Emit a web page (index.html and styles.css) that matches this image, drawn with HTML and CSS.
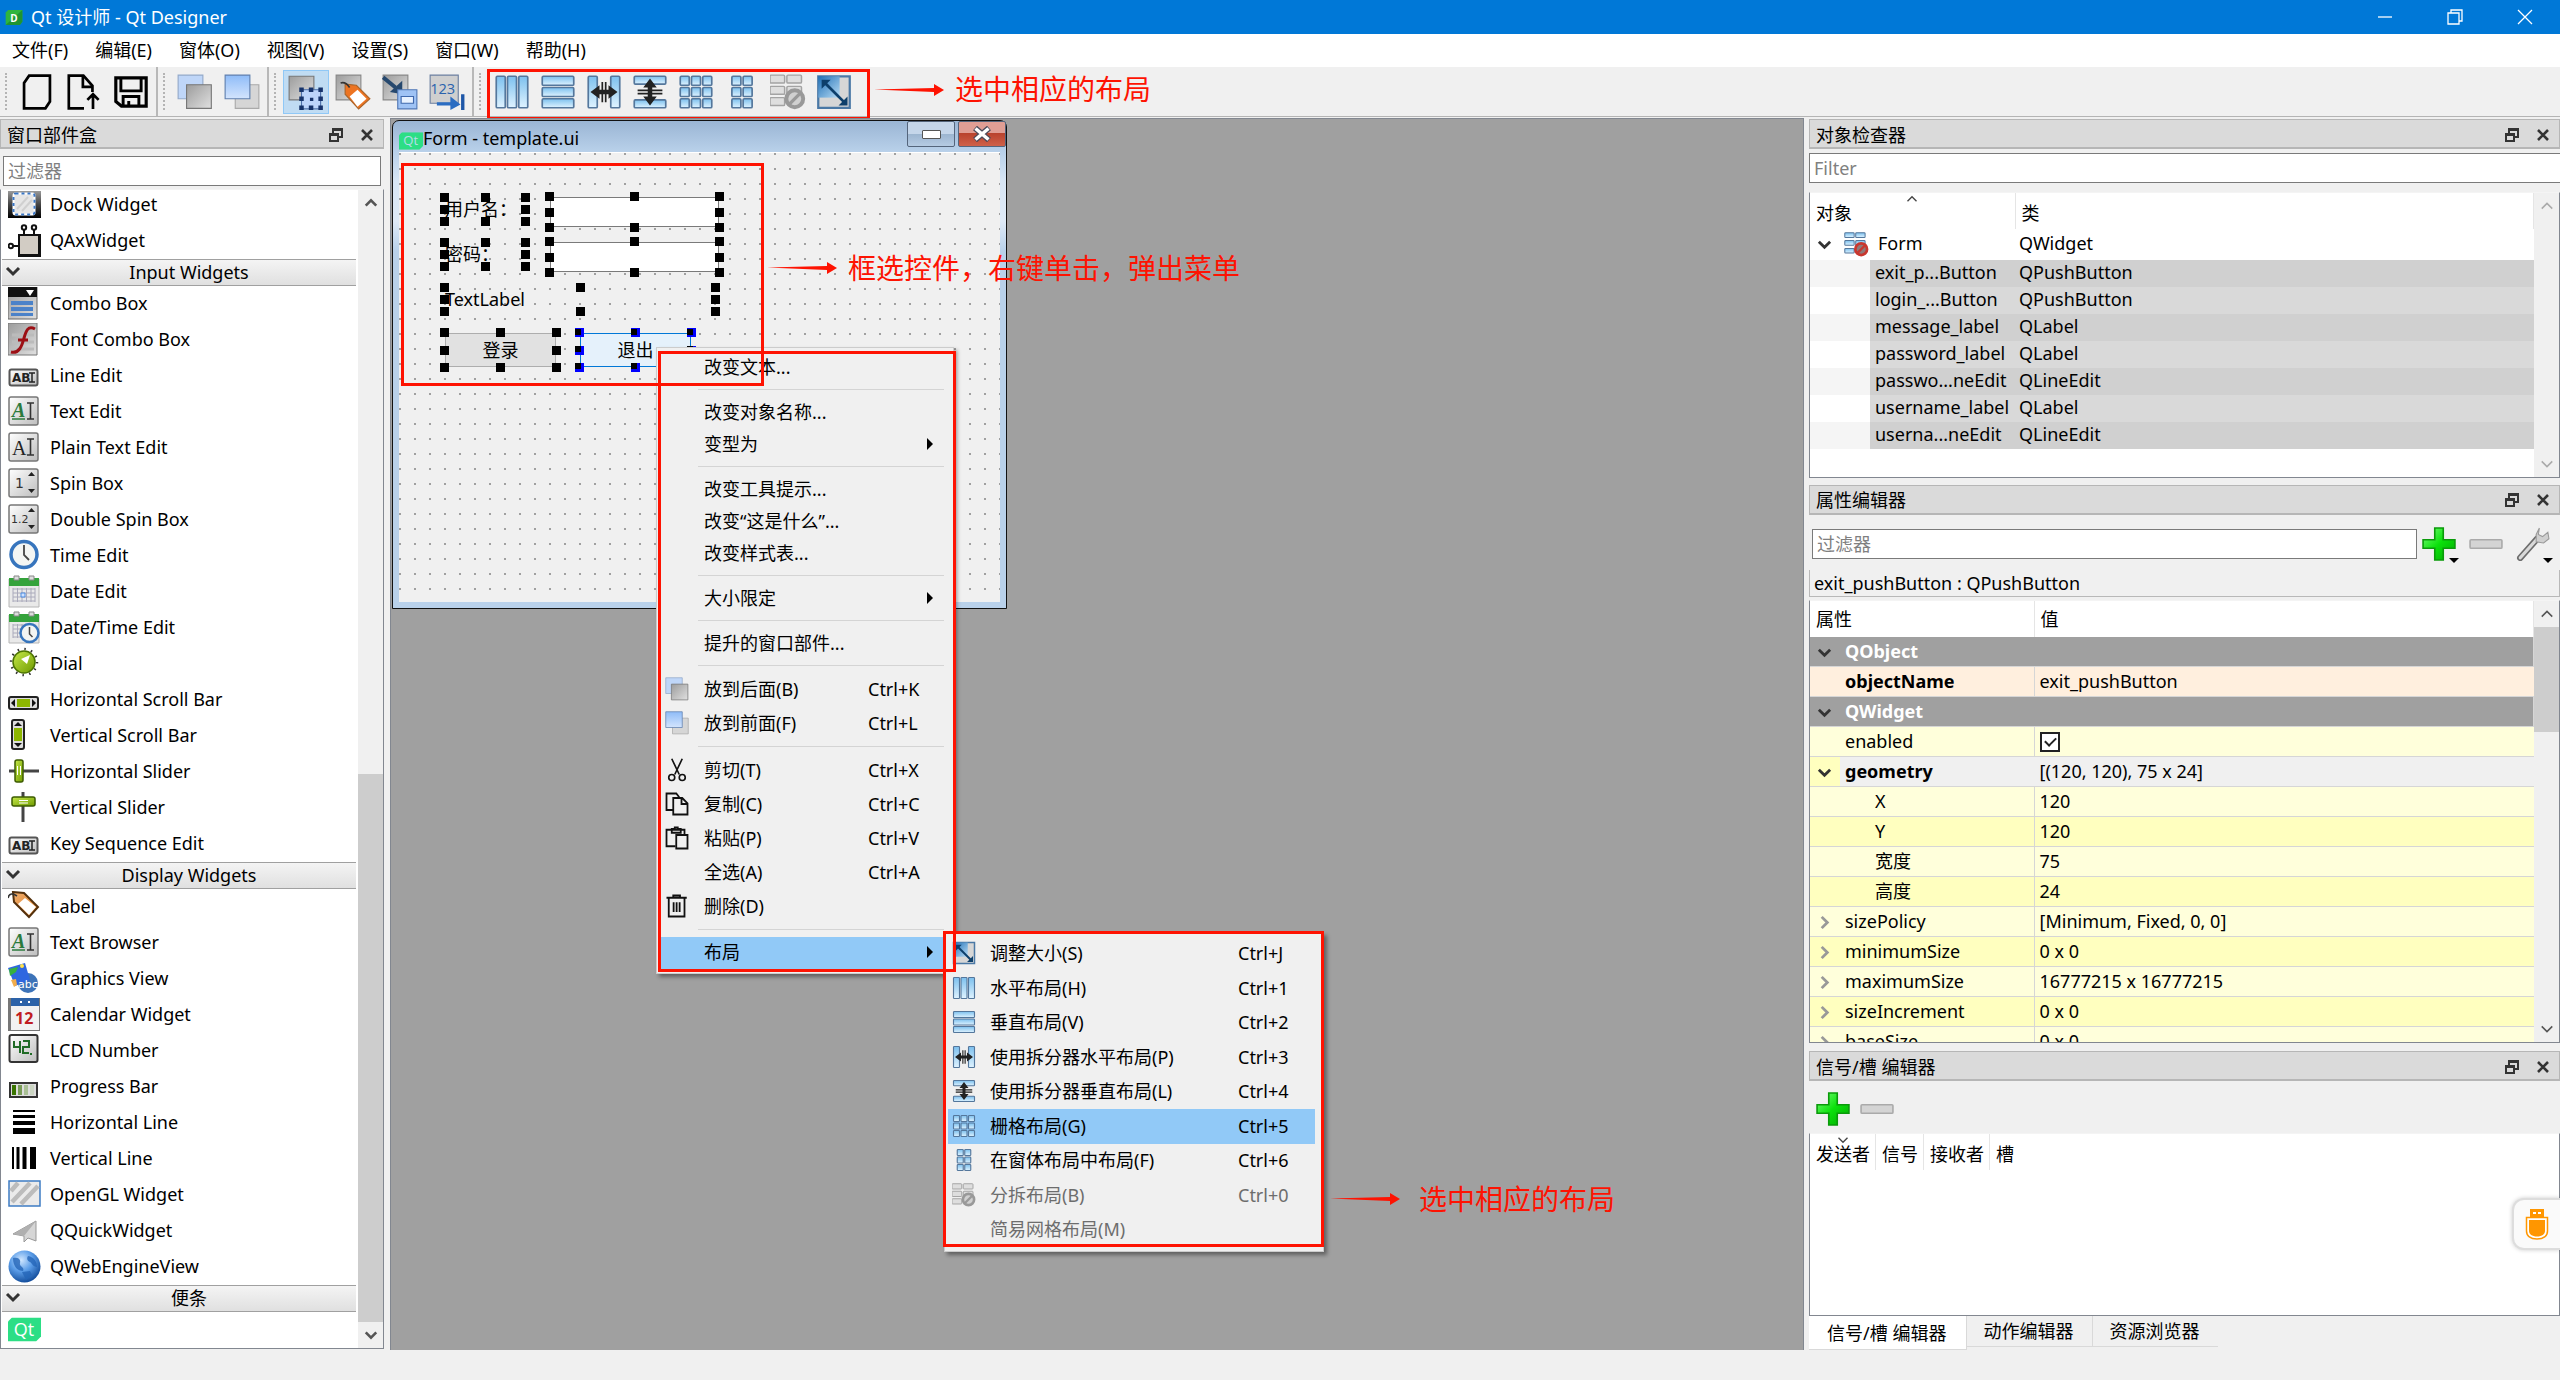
FILE: index.html
```html
<!DOCTYPE html>
<html lang="zh-CN">
<head>
<meta charset="utf-8">
<title>Qt 设计师 - Qt Designer</title>
<link rel="stylesheet" href="styles.css">
</head>
<body>
<svg class="defs" aria-hidden="true">
  <defs>
    <linearGradient id="gBlue" x1="0" y1="0" x2="0" y2="1"><stop offset="0" stop-color="#7cc0ee"/><stop offset="1" stop-color="#dff3ff"/></linearGradient>
    <linearGradient id="gBlueSq" x1="0" y1="0" x2="0" y2="1"><stop offset="0" stop-color="#8fbcf8"/><stop offset="1" stop-color="#d3e4fd"/></linearGradient>
    <linearGradient id="gGray" x1="0" y1="0" x2="1" y2="1"><stop offset="0" stop-color="#9c9c9c"/><stop offset="1" stop-color="#e0e0e0"/></linearGradient>
    <linearGradient id="gKey" x1="0" y1="0" x2="1" y2="1"><stop offset="0" stop-color="#ffffff"/><stop offset="1" stop-color="#bdbdbd"/></linearGradient>
    <linearGradient id="gDark" x1="0" y1="0" x2="0" y2="1"><stop offset="0" stop-color="#9a9a9a"/><stop offset=".5" stop-color="#444"/><stop offset="1" stop-color="#000"/></linearGradient>
    <linearGradient id="gGreen" x1="0" y1="0" x2="1" y2="1"><stop offset="0" stop-color="#7dff7d"/><stop offset=".5" stop-color="#0be00b"/><stop offset="1" stop-color="#00a800"/></linearGradient>
    <linearGradient id="gLime" x1="0" y1="0" x2="1" y2="1"><stop offset="0" stop-color="#c6e94a"/><stop offset="1" stop-color="#6f9a00"/></linearGradient>
    <linearGradient id="gTag" x1="0" y1="0" x2="1" y2="1"><stop offset="0" stop-color="#f3b070"/><stop offset="1" stop-color="#d77a20"/></linearGradient>
    <linearGradient id="gSize" x1="0" y1="0" x2="1" y2="1"><stop offset="0" stop-color="#1f6fb5"/><stop offset="1" stop-color="#b7dbf5"/></linearGradient>
    <radialGradient id="gGlobe" cx=".4" cy=".3" r=".7"><stop offset="0" stop-color="#cfe6ff"/><stop offset=".5" stop-color="#5b9de8"/><stop offset="1" stop-color="#15509f"/></radialGradient>
  </defs>

  <symbol id="i-new" viewBox="0 0 32 32"><path d="M9 1.500h18.500v23l-4 6H4.500V8z" fill="none" stroke="#000" stroke-width="2.400"/></symbol>
  <symbol id="i-open" viewBox="0 0 32 32"><path d="M16 30.500H2.500v-29h13l8 9V16" fill="none" stroke="#000" stroke-width="2.400"/><path d="M15 1.500v10h9M24 31V18M19 23l5-5 5 5" fill="none" stroke="#000" stroke-width="2.400"/></symbol>
  <symbol id="i-save" viewBox="0 0 32 32"><path d="M2.500 3.500h27v25h-22l-5-4z" fill="none" stroke="#000" stroke-width="2.800"/><path d="M7 4v11h18V4M9 28v-8h14v8M14 28v-4" fill="none" stroke="#000" stroke-width="2.600"/></symbol>
  <symbol id="i-back" viewBox="0 0 32 32"><path d="M1 1h22v21H1z" fill="#bfd6f8" stroke="#93a9c9"/><path d="M8.500 9.500h22v21h-22z" fill="url(#gGray)" stroke="#777"/></symbol>
  <symbol id="i-front" viewBox="0 0 32 32"><path d="M10 9.500h21v21H10z" fill="#d6d6d6" stroke="#aaa"/><path d="M1 1h22v21H1z" fill="url(#gBlueSq)" stroke="#5f7fae"/></symbol>
  <symbol id="i-widgets" viewBox="0 0 32 32"><path d="M1 2h22v21H1z" fill="url(#gGray)" stroke="#777"/><path d="M12 14h17v17H12z" fill="#bcd4fb" stroke="#4d6fa8"/><path d="M10 12h4v4h-4zM18.500 12h4v4h-4zM27 12h4v4h-4zM10 20h4v4h-4zM27 20h4v4h-4zM10 28h4v4h-4zM18.500 28h4v4h-4zM27 28h4v4h-4zM19.500 21h3v3h-3z" fill="#16336b"/></symbol>
  <symbol id="i-signals" viewBox="0 0 32 32"><path d="M1 1h22v22H1z" fill="url(#gGray)" stroke="#888"/><path d="M9 9l10 1 12 12-10 9L9 18z" fill="#ed7422" stroke="#a9652b"/><path d="M20 14l8 8-8 7-7-9z" fill="#fff"/><path d="M5 8c3-1 6 1 8 4" stroke="#333" fill="none" stroke-width="1.500"/></symbol>
  <symbol id="i-buddy" viewBox="0 0 32 32"><path d="M1 1h22v22H1z" fill="url(#gGray)" stroke="#888"/><path d="M1 3l11 9" stroke="#26486e" stroke-width="3.500"/><path d="M18 18V6L7 16z" fill="#26486e"/><path d="M14 14h17v17H14z" fill="#9fc3f5" stroke="#5077b5"/><path d="M17 20h11v6H17z" fill="#e8f2ff" stroke="#3f69ad"/></symbol>
  <symbol id="i-tab" viewBox="0 0 32 32"><path d="M1 1h25v25H1z" fill="#cfcfcf" stroke="#6b7fa0"/><path d="M7 25h12v-5l9 7-9 5v-4H7z" fill="#2b6dc2"/><path d="M30 18v14" stroke="#1e57a8" stroke-width="3"/></symbol>
  <symbol id="i-h" viewBox="0 0 32 32"><g fill="url(#gBlue)" stroke="#54779c" stroke-width="1.500"><rect x="2" y="2" width="8" height="28" rx="1"/><rect x="12" y="2" width="8" height="28" rx="1"/><rect x="22" y="2" width="8" height="28" rx="1"/></g></symbol>
  <symbol id="i-v" viewBox="0 0 32 32"><g fill="url(#gBlue)" stroke="#54779c" stroke-width="1.500"><rect x="2" y="2" width="28" height="8" rx="1"/><rect x="2" y="12" width="28" height="8" rx="1"/><rect x="2" y="22" width="28" height="8" rx="1"/></g></symbol>
  <symbol id="i-hs" viewBox="0 0 32 32"><g fill="url(#gBlue)" stroke="#54779c" stroke-width="1.500"><rect x="2" y="2" width="8" height="28" rx="1"/><rect x="22" y="2" width="8" height="28" rx="1"/></g><path d="M14.500 7v18M17.500 7v18" stroke="#222" stroke-width="1.500"/><path d="M4 16l8-6v4h8v-4l8 6-8 6v-4h-8v4z" fill="#222"/></symbol>
  <symbol id="i-vs" viewBox="0 0 32 32"><g fill="url(#gBlue)" stroke="#54779c" stroke-width="1.500"><rect x="2" y="2" width="28" height="7" rx="1"/><rect x="2" y="23" width="28" height="7" rx="1"/></g><path d="M5 14.500h22M5 17.500h22" stroke="#222" stroke-width="1.500"/><path d="M16 4l6 8h-4v8h4l-6 8-6-8h4v-8h-4z" fill="#222"/></symbol>
  <symbol id="i-grid" viewBox="0 0 32 32"><g fill="url(#gBlue)" stroke="#54779c" stroke-width="1.500"><rect x="2" y="2" width="8" height="8" rx="1"/><rect x="12" y="2" width="8" height="8" rx="1"/><rect x="22" y="2" width="8" height="8" rx="1"/><rect x="2" y="12" width="8" height="8" rx="1"/><rect x="12" y="12" width="8" height="8" rx="1"/><rect x="22" y="12" width="8" height="8" rx="1"/><rect x="2" y="22" width="8" height="8" rx="1"/><rect x="12" y="22" width="8" height="8" rx="1"/><rect x="22" y="22" width="8" height="8" rx="1"/></g></symbol>
  <symbol id="i-form" viewBox="0 0 32 32"><g fill="url(#gBlue)" stroke="#54779c" stroke-width="1.500"><rect x="7" y="2" width="8" height="8" rx="1"/><rect x="17" y="2" width="8" height="8" rx="1"/><rect x="7" y="12" width="8" height="8" rx="1"/><rect x="17" y="12" width="8" height="8" rx="1"/><rect x="7" y="22" width="8" height="8" rx="1"/><rect x="17" y="22" width="8" height="8" rx="1"/></g></symbol>
  <symbol id="i-break" viewBox="0 0 32 32"><g fill="#dedede" stroke="#a3a3a3" stroke-width="1.300"><rect x="0" y="1" width="13" height="7" rx="1"/><rect x="15" y="1" width="13" height="7" rx="1"/><rect x="0" y="11" width="13" height="7" rx="1"/><rect x="15" y="11" width="13" height="7" rx="1"/><rect x="0" y="21" width="13" height="7" rx="1"/></g><circle cx="22" cy="22" r="7.500" fill="#d0d0d0" stroke="#999" stroke-width="3.500"/><path d="M17 27l10-10" stroke="#999" stroke-width="3"/></symbol>
  <symbol id="i-nolayout" viewBox="0 0 32 32"><g fill="url(#gBlue)" stroke="#54779c" stroke-width="1.300"><rect x="1" y="1" width="12" height="6" rx="1"/><rect x="15" y="1" width="12" height="6" rx="1"/><rect x="1" y="11" width="12" height="6" rx="1"/><rect x="15" y="11" width="12" height="6" rx="1"/><rect x="1" y="21" width="12" height="6" rx="1"/></g><circle cx="22" cy="22" r="7.500" fill="#8f7a7a" stroke="#c8372f" stroke-width="3.500"/><path d="M17 27l10-10" stroke="#c8372f" stroke-width="3"/></symbol>
  <symbol id="i-adjust" viewBox="0 0 32 32"><path d="M2 2h28v28H2z" fill="#d6d6d6" stroke="#4a78a5" stroke-width="2"/><path d="M2 2h19v19H2z" fill="url(#gSize)"/><path d="M8 8l17 17" stroke="#0d3f6b" stroke-width="2.500"/><path d="M5 5h8l-8 8zM28 28h-8l8-8z" fill="#0d3f6b"/></symbol>
  <symbol id="i-cut" viewBox="0 0 32 32"><g fill="none" stroke="#111" stroke-width="2.200"><path d="M9 1l10 21M23 1L13 22"/><circle cx="9" cy="26" r="4"/><circle cx="23" cy="26" r="4"/></g></symbol>
  <symbol id="i-copy" viewBox="0 0 32 32"><g fill="none" stroke="#111" stroke-width="2.400"><path d="M11 24H2V2h13l4 5"/><path d="M11 8h12l7 7v15H11zM22 8v8h8"/></g></symbol>
  <symbol id="i-paste" viewBox="0 0 32 32"><g fill="none" stroke="#111" stroke-width="2.400"><path d="M14 27H2V5h24v6M9 9V4h4V2h4v2h4v5z"/><path d="M15 12h15v18H15z"/></g></symbol>
  <symbol id="i-del" viewBox="0 0 32 32"><g fill="none" stroke="#111" stroke-width="2.400"><path d="M2 5h27M11 5V2h9v3M5 5v25h21V5M11.500 11v13M15.500 11v13M19.500 11v13"/></g></symbol>

  <symbol id="w-dock" viewBox="0 0 33 33"><path d="M0 3h33v27H0z" fill="url(#gDark)"/><rect x="5.500" y="5.500" width="21" height="21" rx="2" fill="#e6e6e6" stroke="#fff" stroke-width="2"/><rect x="5.500" y="5.500" width="21" height="21" rx="2" fill="none" stroke="#3a76c4" stroke-width="2" stroke-dasharray="3 3"/><path d="M9 21L20 9M14 23l10-11" stroke="#d0d0d0" stroke-width="2"/></symbol>
  <symbol id="w-ax" viewBox="0 0 33 33"><path d="M10 10h23v23H10z" fill="#111"/><path d="M12 12h18v18H12z" fill="#d2ccc4"/><g stroke="#111" stroke-width="2" fill="#fff"><path d="M16 11V6M26 11V6M10 22H5"/><circle cx="16" cy="3.500" r="2.200"/><circle cx="26" cy="3.500" r="2.200"/><circle cx="2.800" cy="22" r="2.200"/></g></symbol>
  <symbol id="w-combo" viewBox="0 0 33 33"><path d="M0 0h29v32H0z" fill="url(#gGray)" stroke="#666"/><path d="M0 0h29v10H0z" fill="#111"/><path d="M18 3h8l-4 6z" fill="#fff"/><path d="M3 14h22v4H3zM3 20h22v4H3zM3 26h22v3H3z" fill="#4b82c9"/></symbol>
  <symbol id="w-font" viewBox="0 0 33 33"><path d="M0 0h29v32H0z" fill="url(#gGray)" stroke="#777"/><path d="M4 12h22M4 19h22M4 26h22" stroke="#bbb" stroke-width="3"/><path d="M27 6c-7-4-9 2-11 9-2 8-5 16-13 14M10 17h10" fill="none" stroke="#9c0f14" stroke-width="3"/></symbol>
  <symbol id="w-line" viewBox="0 0 33 33"><rect x="1.500" y="10.500" width="28" height="16" rx="2" fill="url(#gKey)" stroke="#555" stroke-width="2"/><path d="M21 14h6M21 23h6M24 14v9" stroke="#222" stroke-width="1.500"/></symbol>
  <symbol id="w-key" viewBox="0 0 33 33"><rect x="1" y="2" width="29" height="28" rx="2" fill="url(#gKey)" stroke="#777" stroke-width="1.500"/></symbol>
  <symbol id="w-edit" viewBox="0 0 33 33"><use href="#w-key"/><path d="M19 8h7M19 24h7M22.500 8v16" stroke="#333" stroke-width="1.600"/></symbol>
  <symbol id="w-spin" viewBox="0 0 33 33"><use href="#w-key"/><path d="M20 9l3.500-4L27 9zM20 22l3.500 4 3.500-4z" fill="#222"/></symbol>
  <symbol id="w-time" viewBox="0 0 33 33"><circle cx="16" cy="15.500" r="13" fill="#f3f5f3" stroke="#3775bd" stroke-width="3.500"/><path d="M16 6v10l5 5" fill="none" stroke="#444" stroke-width="1.800"/></symbol>
  <symbol id="w-date" viewBox="0 0 33 33"><path d="M1 4h30v28H1z" fill="#e9e9e9" stroke="#b5b5b5"/><path d="M1 3h30v8H1z" fill="#35a33c"/><path d="M6 1h5v4H6zM21 1h5v4h-5z" fill="#ddd" stroke="#888"/><path d="M5 14h22M5 18h22M5 22h22M5 26h22M5 13v14M9.500 13v14M14 13v14M18.500 13v14M23 13v14M27 13v14" stroke="#aab" fill="none"/><path d="M13 18h4v4h-4z" fill="#cfe2ff" stroke="#4b8be0"/></symbol>
  <symbol id="w-datetime" viewBox="0 0 33 33"><use href="#w-date"/><circle cx="21.500" cy="22" r="9" fill="#f3f5f3" stroke="#3775bd" stroke-width="2.500"/><path d="M21.500 16v7l3 3" fill="none" stroke="#444" stroke-width="1.500"/></symbol>
  <symbol id="w-dial" viewBox="0 0 33 33"><circle cx="16" cy="15" r="13" fill="none" stroke="#333" stroke-width="2.500" stroke-dasharray="1.500 5.300"/><circle cx="16" cy="15" r="11" fill="url(#gLime)" stroke="#4d7500" stroke-width="1.500"/><path d="M22 8l-9 4 6 5z" fill="#fff"/></symbol>
  <symbol id="w-hscroll" viewBox="0 0 33 33"><rect x="1" y="14" width="29" height="12" rx="2" fill="#ddd" stroke="#222" stroke-width="2"/><path d="M9 16h13v8H9z" fill="#8db600"/><path d="M7 16v8l-4-4zM24 16v8l4-4z" fill="#111"/></symbol>
  <symbol id="w-vscroll" viewBox="0 0 33 33"><rect x="4" y="1" width="12" height="29" rx="2" fill="#ddd" stroke="#222" stroke-width="2"/><path d="M6 9h8v13H6z" fill="#8db600"/><path d="M6 7h8l-4-4zM6 24h8l-4 4z" fill="#111"/></symbol>
  <symbol id="w-hslider" viewBox="0 0 33 33"><path d="M1 16h30" stroke="#444" stroke-width="3"/><rect x="7" y="5" width="8" height="22" rx="2" fill="url(#gLime)" stroke="#3d5c00" stroke-width="1.500"/><path d="M9.500 11v9M12.500 11v9" stroke="#fff"/></symbol>
  <symbol id="w-vslider" viewBox="0 0 33 33"><path d="M15 1v30" stroke="#444" stroke-width="3"/><rect x="4" y="6" width="23" height="9" rx="2" fill="url(#gLime)" stroke="#3d5c00" stroke-width="1.500"/><path d="M11 9.500h9M11 12h9" stroke="#fff"/></symbol>
  <symbol id="w-label" viewBox="0 0 33 33"><path d="M5 2l11 1 14 14-9 10L6 12z" fill="url(#gTag)" stroke="#54310d" stroke-width="2"/><path d="M17 8l11 9-7 8L10 14z" fill="#fff"/><path d="M0 8c1-5 5-5 9-2" fill="none" stroke="#333" stroke-width="1.600"/></symbol>
  <symbol id="w-view" viewBox="0 0 33 33"><circle cx="20" cy="21" r="10" fill="#3d73b8"/><path d="M0 6l17-5 5 17-15 6z" fill="#2f67e0"/><path d="M1 7l9-2-2 5-6 4z" fill="#37b03f"/><circle cx="14" cy="4" r="2" fill="#ffe14a"/><path d="M3 18l5-1 1 6-3 2z" fill="#f1ad4d"/></symbol>
  <symbol id="w-cal" viewBox="0 0 33 33"><path d="M0 0h32v33H0z" fill="#777"/><path d="M3 6h28v26H3z" fill="#f2f2f2"/><path d="M3 0h28v8H3z" fill="#2c62a8"/><path d="M12 3h2v2h-2zM20 3h2v2h-2z" fill="#fff"/></symbol>
  <symbol id="w-lcd" viewBox="0 0 33 33"><rect x="1.500" y="1" width="28" height="27" rx="2" fill="url(#gKey)" stroke="#333" stroke-width="2"/><path d="M6 7v6h6M12 7v12M15 7h6v6h-6v6h6" fill="none" stroke="#206b26" stroke-width="2"/><path d="M22 19h2v2h-2z" fill="#206b26"/></symbol>
  <symbol id="w-prog" viewBox="0 0 33 33"><rect x="2" y="13" width="27" height="14" fill="#ddd" stroke="#333" stroke-width="2"/><path d="M4 15h4v10H4z" fill="#3a7500"/><path d="M10 15h4v10h-4z" fill="#7a9c58"/><path d="M16 15h4v10h-4z" fill="#a9bf95"/><path d="M22 15h4v10h-4z" fill="#cbd5c2"/></symbol>
  <symbol id="w-hline" viewBox="0 0 33 33"><path d="M5 4h22v2H5zM5 9h22v3H5zM5 15h22v4H5zM5 22h22v6H5z" fill="#000"/></symbol>
  <symbol id="w-vline" viewBox="0 0 33 33"><path d="M4 5v22h2V5zM8.500 5v22h3V5zM14.500 5v22h4V5zM22 5v22h6V5z" fill="#000"/></symbol>
  <symbol id="w-gl" viewBox="0 0 33 33"><path d="M1 3h31v25H1z" fill="#ebebeb" stroke="#3e7cc4" stroke-width="1.500"/><path d="M4 24L22 5M13 26L30 8M3 13l7-8" stroke="#bcbcbc" stroke-width="4.500"/></symbol>
  <symbol id="w-quick" viewBox="0 0 33 33"><path d="M5 20L28 7v20l-8-3-4 4v-6z" fill="#d6d6d6" stroke="#999"/><path d="M28 7L16 22l-11-2z" fill="#b0b0b0"/></symbol>
  <symbol id="w-web" viewBox="0 0 33 33"><circle cx="16.500" cy="16.500" r="16" fill="url(#gGlobe)"/><path d="M5 8c5-1 8 1 7 5s5 4 3 8c-5 0-10-4-10-13zM20 6c6 1 9 6 9 11-4 0-5-4-7-5s-4-3-2-6zM14 22l8-1 2 4-6 5z" fill="#2465b8" opacity=".8"/></symbol>
  <symbol id="w-qt" viewBox="0 0 33 24"><path d="M4 0h29v19l-5 5H0V4z" fill="#2cde85"/></symbol>
  <symbol id="i-plus" viewBox="0 0 32 32"><path d="M12 1h8v11h11v8H20v11h-8V20H1v-8h11z" fill="url(#gGreen)" stroke="#0a9a0a" stroke-width="1.500"/></symbol>
  <symbol id="i-minus" viewBox="0 0 32 32"><rect x="1" y="12" width="30" height="8" rx="1" fill="#d4d4d4" stroke="#aaa" stroke-width="1.500"/></symbol>
  <symbol id="i-wrench" viewBox="0 0 32 32"><path d="M4 29L20 11" stroke="#6d6d6d" stroke-width="6" stroke-linecap="round"/><path d="M4 29L20 11" stroke="#d9d9d9" stroke-width="3" stroke-linecap="round"/><path d="M22 1l-3 6v7l7 1 5-4-1-6-5 4-4-2z" fill="#cfcfcf" stroke="#999"/></symbol>
  <symbol id="i-chev" viewBox="0 0 16 16"><path d="M2 5l6 6 6-6" fill="none" stroke="currentColor" stroke-width="3"/></symbol>
  <symbol id="i-thin" viewBox="0 0 16 16"><path d="M2 5l6 6 6-6" fill="none" stroke="currentColor" stroke-width="1.800"/></symbol>
  <symbol id="i-float" viewBox="0 0 16 16"><path d="M5 6V2h9v8h-4" fill="none" stroke="#333" stroke-width="2"/><path d="M5 2.500h9" stroke="#333" stroke-width="3"/><path d="M2 7h8v7H2zM2 8h8" fill="none" stroke="#333" stroke-width="2"/></symbol>
  <symbol id="i-x" viewBox="0 0 16 16"><path d="M3 3l10 10M13 3L3 13" stroke="#333" stroke-width="2.600"/></symbol>
  <symbol id="i-arrow" viewBox="0 0 70 16"><path d="M0 7.500L60 6V2L70 8l-10 6V10z" fill="#fe1302"/></symbol>
  <symbol id="i-tri" viewBox="0 0 8 12"><path d="M1 0l6 6-6 6z" fill="#000"/></symbol>
</svg>

<header class="titlebar">
  <svg class="app-icon" viewBox="0 0 20 18"><path d="M3 0h17v14l-3 4H0V3z" fill="#2fb53e"/><path d="M0 18L20 0v14l-3 4z" fill="#1f9431"/><text x="10" y="14" font-size="12" font-weight="bold" text-anchor="middle" class="o" fill="#fff">D</text></svg>
  <span class="app-title">Qt 设计师 - Qt Designer</span>
  <button class="win-btn" aria-label="最小化"><svg viewBox="0 0 16 16"><path d="M1 8h14" stroke="#fff" stroke-width="1.300"/></svg></button>
  <button class="win-btn" aria-label="还原"><svg viewBox="0 0 16 16"><path d="M1 4h11v11H1zM4 4V1h11v11h-3" fill="none" stroke="#fff" stroke-width="1.300"/></svg></button>
  <button class="win-btn" aria-label="关闭"><svg viewBox="0 0 16 16"><path d="M1 1l14 14M15 1L1 15" stroke="#fff" stroke-width="1.300"/></svg></button>
</header>

<nav class="menubar">
  <button>文件(F)</button><button>编辑(E)</button><button>窗体(O)</button><button>视图(V)</button><button>设置(S)</button><button>窗口(W)</button><button>帮助(H)</button>
</nav>

<div class="toolbar">
  <div class="group">
    <button aria-label="新建"><svg><use href="#i-new"/></svg></button>
    <button aria-label="打开"><svg><use href="#i-open"/></svg></button>
    <button aria-label="保存"><svg><use href="#i-save"/></svg></button>
  </div>
  <div class="group">
    <button aria-label="放到后面"><svg><use href="#i-back"/></svg></button>
    <button aria-label="放到前面"><svg><use href="#i-front"/></svg></button>
  </div>
  <div class="group">
    <button class="on" aria-label="编辑窗口部件"><svg><use href="#i-widgets"/></svg></button>
    <button aria-label="编辑信号/槽"><svg><use href="#i-signals"/></svg></button>
    <button aria-label="编辑伙伴"><svg><use href="#i-buddy"/></svg></button>
    <button aria-label="编辑 Tab 顺序"><svg viewBox="0 0 32 32"><use href="#i-tab"/><text x="1" y="18" font-size="13" class="o" fill="#2a62ad">123</text></svg></button>
  </div>
  <div class="group layouts">
    <button aria-label="水平布局"><svg><use href="#i-h"/></svg></button>
    <button aria-label="垂直布局"><svg><use href="#i-v"/></svg></button>
    <button aria-label="使用拆分器水平布局"><svg><use href="#i-hs"/></svg></button>
    <button aria-label="使用拆分器垂直布局"><svg><use href="#i-vs"/></svg></button>
    <button aria-label="栅格布局"><svg><use href="#i-grid"/></svg></button>
    <button aria-label="在窗体布局中布局"><svg><use href="#i-form"/></svg></button>
    <button aria-label="分拆布局"><svg><use href="#i-break"/></svg></button>
    <button aria-label="调整大小"><svg><use href="#i-adjust"/></svg></button>
  </div>
  <svg class="note-arrow"><use href="#i-arrow"/></svg>
  <span class="note">选中相应的布局</span>
</div>

<main class="work">
  <aside class="dock left">
    <h2 class="dock-title"><span>窗口部件盒</span><button aria-label="浮动"><svg><use href="#i-float"/></svg></button><button aria-label="关闭"><svg><use href="#i-x"/></svg></button></h2>
    <input class="filter" type="text" placeholder="过滤器" aria-label="过滤器">
    <div class="panel">
      <div class="widget-list">
        <ul>
          <li><svg><use href="#w-dock"/></svg>Dock Widget</li>
          <li><svg><use href="#w-ax"/></svg>QAxWidget</li>
        </ul>
        <h3><svg><use href="#i-chev"/></svg>Input Widgets</h3>
        <ul>
          <li><svg><use href="#w-combo"/></svg>Combo Box</li>
          <li><svg><use href="#w-font"/></svg>Font Combo Box</li>
          <li><svg viewBox="0 0 33 33"><use href="#w-line"/><text x="4" y="23" font-size="12" font-weight="bold" class="t" fill="#222">AB</text></svg>Line Edit</li>
          <li><svg viewBox="0 0 33 33"><use href="#w-edit"/><text x="4" y="22" font-size="20" font-style="italic" font-weight="bold" class="s" fill="#2b7a3d">A</text><path d="M4 24h13" stroke="#2b7a3d" stroke-width="1.500"/></svg>Text Edit</li>
          <li><svg viewBox="0 0 33 33"><use href="#w-edit"/><text x="4" y="24" font-size="20" class="s" fill="#222">A</text></svg>Plain Text Edit</li>
          <li><svg viewBox="0 0 33 33"><use href="#w-spin"/><text x="7" y="21" font-size="14" class="t" fill="#333">1</text></svg>Spin Box</li>
          <li><svg viewBox="0 0 33 33"><use href="#w-spin"/><text x="3" y="20" font-size="11" class="t" fill="#333">1.2</text></svg>Double Spin Box</li>
          <li><svg><use href="#w-time"/></svg>Time Edit</li>
          <li><svg><use href="#w-date"/></svg>Date Edit</li>
          <li><svg><use href="#w-datetime"/></svg>Date/Time Edit</li>
          <li><svg><use href="#w-dial"/></svg>Dial</li>
          <li><svg><use href="#w-hscroll"/></svg>Horizontal Scroll Bar</li>
          <li><svg><use href="#w-vscroll"/></svg>Vertical Scroll Bar</li>
          <li><svg><use href="#w-hslider"/></svg>Horizontal Slider</li>
          <li><svg><use href="#w-vslider"/></svg>Vertical Slider</li>
          <li><svg viewBox="0 0 33 33"><use href="#w-line"/><text x="4" y="23" font-size="12" font-weight="bold" class="t" fill="#222">AB</text></svg>Key Sequence Edit</li>
        </ul>
        <h3><svg><use href="#i-chev"/></svg>Display Widgets</h3>
        <ul>
          <li><svg><use href="#w-label"/></svg>Label</li>
          <li><svg viewBox="0 0 33 33"><use href="#w-edit"/><text x="4" y="22" font-size="20" font-style="italic" font-weight="bold" class="s" fill="#2b7a3d">A</text><path d="M4 24h13" stroke="#2b7a3d" stroke-width="1.500"/></svg>Text Browser</li>
          <li><svg viewBox="0 0 33 33"><use href="#w-view"/><text x="10" y="26" font-size="11" class="t" fill="#fff">abc</text></svg>Graphics View</li>
          <li><svg viewBox="0 0 33 33"><use href="#w-cal"/><text x="7" y="26" font-size="16" font-weight="bold" class="o" fill="#c01c22">12</text></svg>Calendar Widget</li>
          <li><svg><use href="#w-lcd"/></svg>LCD Number</li>
          <li><svg><use href="#w-prog"/></svg>Progress Bar</li>
          <li><svg><use href="#w-hline"/></svg>Horizontal Line</li>
          <li><svg><use href="#w-vline"/></svg>Vertical Line</li>
          <li><svg><use href="#w-gl"/></svg>OpenGL Widget</li>
          <li><svg><use href="#w-quick"/></svg>QQuickWidget</li>
          <li><svg><use href="#w-web"/></svg>QWebEngineView</li>
        </ul>
        <h3><svg><use href="#i-chev"/></svg>便条</h3>
        <ul><li><svg viewBox="0 0 33 24"><use href="#w-qt"/><text x="16" y="18" font-size="18" text-anchor="middle" class="o" fill="#fff">Qt</text></svg></li></ul>
      </div>
      <div class="scroll scroll-box"><svg class="up"><use href="#i-chev"/></svg><div class="track"><span class="thumb"></span></div><svg><use href="#i-chev"/></svg></div>
    </div>
  </aside>

  <section class="mdi">
    <div class="form-window">
      <div class="form-title"><svg viewBox="0 0 33 24"><use href="#w-qt"/><text x="16" y="18" font-size="18" text-anchor="middle" class="o" fill="#b6dcea">Qt</text></svg><span>Form - template.ui</span>
        <button class="fmin" aria-label="最小化"></button><button class="fclose" aria-label="关闭"><svg viewBox="0 0 20 16"><path d="M3 2l14 12M17 2L3 14" stroke="#4a4a5a" stroke-width="6"/><path d="M3.500 2.500l13 11M16.500 2.500l-13 11" stroke="#fff" stroke-width="3.500"/></svg></button>
      </div>
      <div class="form-body">
        <div class="w w-user"><label for="user">用户名：</label><i class="sel"></i></div>
        <div class="w w-usere"><input id="user" type="text"><i class="sel"></i></div>
        <div class="w w-pass"><label for="pass">密码：</label><i class="sel"></i></div>
        <div class="w w-passe"><input id="pass" type="password"><i class="sel"></i></div>
        <div class="w w-msg"><span>TextLabel</span><i class="sel"></i></div>
        <div class="w w-login"><button>登录</button><i class="sel"></i></div>
        <div class="w w-exit"><button>退出</button><i class="sel main"></i></div>
      </div>
    </div>

    <div class="menu ctx" role="menu">
      <button role="menuitem"><span>改变文本...</span></button>
      <hr>
      <button role="menuitem"><span>改变对象名称...</span></button>
      <button role="menuitem"><span>变型为</span><svg class="tri"><use href="#i-tri"/></svg></button>
      <hr>
      <button role="menuitem"><span>改变工具提示...</span></button>
      <button role="menuitem"><span>改变“这是什么”...</span></button>
      <button role="menuitem"><span>改变样式表...</span></button>
      <hr>
      <button role="menuitem"><span>大小限定</span><svg class="tri"><use href="#i-tri"/></svg></button>
      <hr>
      <button role="menuitem"><span>提升的窗口部件...</span></button>
      <hr>
      <button role="menuitem" class="tall"><svg><use href="#i-back"/></svg><span>放到后面(B)</span><kbd>Ctrl+K</kbd></button>
      <button role="menuitem" class="tall"><svg><use href="#i-front"/></svg><span>放到前面(F)</span><kbd>Ctrl+L</kbd></button>
      <hr>
      <button role="menuitem" class="tall"><svg><use href="#i-cut"/></svg><span>剪切(T)</span><kbd>Ctrl+X</kbd></button>
      <button role="menuitem" class="tall"><svg><use href="#i-copy"/></svg><span>复制(C)</span><kbd>Ctrl+C</kbd></button>
      <button role="menuitem" class="tall"><svg><use href="#i-paste"/></svg><span>粘贴(P)</span><kbd>Ctrl+V</kbd></button>
      <button role="menuitem" class="tall"><span>全选(A)</span><kbd>Ctrl+A</kbd></button>
      <button role="menuitem" class="tall"><svg><use href="#i-del"/></svg><span>删除(D)</span></button>
      <hr>
      <button role="menuitem" class="hot"><span>布局</span><svg class="tri"><use href="#i-tri"/></svg></button>
    </div>

    <div class="menu sub" role="menu">
      <button role="menuitem"><svg><use href="#i-adjust"/></svg><span>调整大小(S)</span><kbd>Ctrl+J</kbd></button>
      <button role="menuitem"><svg><use href="#i-h"/></svg><span>水平布局(H)</span><kbd>Ctrl+1</kbd></button>
      <button role="menuitem"><svg><use href="#i-v"/></svg><span>垂直布局(V)</span><kbd>Ctrl+2</kbd></button>
      <button role="menuitem"><svg><use href="#i-hs"/></svg><span>使用拆分器水平布局(P)</span><kbd>Ctrl+3</kbd></button>
      <button role="menuitem"><svg><use href="#i-vs"/></svg><span>使用拆分器垂直布局(L)</span><kbd>Ctrl+4</kbd></button>
      <button role="menuitem" class="hot"><svg><use href="#i-grid"/></svg><span>栅格布局(G)</span><kbd>Ctrl+5</kbd></button>
      <button role="menuitem"><svg><use href="#i-form"/></svg><span>在窗体布局中布局(F)</span><kbd>Ctrl+6</kbd></button>
      <button role="menuitem" disabled><svg><use href="#i-break"/></svg><span>分拆布局(B)</span><kbd>Ctrl+0</kbd></button>
      <button role="menuitem" disabled><span>简易网格布局(M)</span></button>
    </div>

    <div class="mark mark-form"></div>
    <div class="mark mark-ctx"></div>
    <div class="mark mark-sub"></div>
    <div class="callout callout-form"><svg class="note-arrow"><use href="#i-arrow"/></svg><span class="note">框选控件，右键单击，弹出菜单</span></div>
    <div class="callout callout-sub"><svg class="note-arrow"><use href="#i-arrow"/></svg><span class="note">选中相应的布局</span></div>
  </section>

  <aside class="dock right">
    <h2 class="dock-title"><span>对象检查器</span><button aria-label="浮动"><svg><use href="#i-float"/></svg></button><button aria-label="关闭"><svg><use href="#i-x"/></svg></button></h2>
    <input class="filter" type="text" placeholder="Filter" aria-label="Filter">
    <div class="panel tree-panel">
      <table class="tree">
        <colgroup><col class="c-obj"><col></colgroup>
        <thead><tr><th>对象<svg class="sort up"><use href="#i-thin"/></svg></th><th>类</th></tr></thead>
        <tbody>
          <tr class="root"><td><svg class="chev"><use href="#i-chev"/></svg><svg class="lay"><use href="#i-nolayout"/></svg>Form</td><td>QWidget</td></tr>
          <tr><td>exit_p...Button</td><td>QPushButton</td></tr>
          <tr><td>login_...Button</td><td>QPushButton</td></tr>
          <tr><td>message_label</td><td>QLabel</td></tr>
          <tr><td>password_label</td><td>QLabel</td></tr>
          <tr><td>passwo...neEdit</td><td>QLineEdit</td></tr>
          <tr><td>username_label</td><td>QLabel</td></tr>
          <tr><td>userna...neEdit</td><td>QLineEdit</td></tr>
        </tbody>
      </table>
      <div class="scroll idle"><svg class="up"><use href="#i-thin"/></svg><div class="track"></div><svg><use href="#i-thin"/></svg></div>
    </div>

    <h2 class="dock-title"><span>属性编辑器</span><button aria-label="浮动"><svg><use href="#i-float"/></svg></button><button aria-label="关闭"><svg><use href="#i-x"/></svg></button></h2>
    <div class="prop-tools">
      <input class="filter" type="text" placeholder="过滤器" aria-label="过滤器">
      <button class="drop" aria-label="添加动态属性"><svg><use href="#i-plus"/></svg></button>
      <button aria-label="删除动态属性"><svg><use href="#i-minus"/></svg></button>
      <button class="drop" aria-label="配置"><svg><use href="#i-wrench"/></svg></button>
    </div>
    <div class="strip">exit_pushButton : QPushButton</div>
    <div class="panel prop-panel">
      <table class="props">
        <colgroup><col class="c-prop"><col></colgroup>
        <thead><tr><th>属性</th><th>值</th></tr></thead>
        <tbody>
          <tr class="grp"><td colspan="2"><svg class="chev"><use href="#i-chev"/></svg>QObject</td></tr>
          <tr class="peach"><td><b>objectName</b></td><td>exit_pushButton</td></tr>
          <tr class="grp"><td colspan="2"><svg class="chev"><use href="#i-chev"/></svg>QWidget</td></tr>
          <tr><td><label for="enabled">enabled</label></td><td><input id="enabled" type="checkbox" checked></td></tr>
          <tr class="cur"><td><svg class="chev"><use href="#i-chev"/></svg><b>geometry</b></td><td>[(120, 120), 75 x 24]</td></tr>
          <tr><td class="subp">X</td><td>120</td></tr>
          <tr class="alt"><td class="subp">Y</td><td>120</td></tr>
          <tr><td class="subp">宽度</td><td>75</td></tr>
          <tr class="alt"><td class="subp">高度</td><td>24</td></tr>
          <tr><td><svg class="chev side"><use href="#i-chev"/></svg>sizePolicy</td><td>[Minimum, Fixed, 0, 0]</td></tr>
          <tr class="alt"><td><svg class="chev side"><use href="#i-chev"/></svg>minimumSize</td><td>0 x 0</td></tr>
          <tr><td><svg class="chev side"><use href="#i-chev"/></svg>maximumSize</td><td>16777215 x 16777215</td></tr>
          <tr class="alt"><td><svg class="chev side"><use href="#i-chev"/></svg>sizeIncrement</td><td>0 x 0</td></tr>
          <tr><td><svg class="chev side"><use href="#i-chev"/></svg>baseSize</td><td>0 x 0</td></tr>
        </tbody>
      </table>
      <div class="scroll scroll-prop"><svg class="up"><use href="#i-thin"/></svg><div class="track"><span class="thumb"></span></div><svg><use href="#i-thin"/></svg></div>
    </div>

    <h2 class="dock-title"><span>信号/槽 编辑器</span><button aria-label="浮动"><svg><use href="#i-float"/></svg></button><button aria-label="关闭"><svg><use href="#i-x"/></svg></button></h2>
    <div class="sig-tools">
      <button aria-label="添加"><svg><use href="#i-plus"/></svg></button>
      <button aria-label="删除"><svg><use href="#i-minus"/></svg></button>
    </div>
    <div class="panel sig-panel">
      <table class="sigs"><thead><tr><th>发送者<svg class="sort"><use href="#i-thin"/></svg></th><th>信号</th><th>接收者</th><th>槽</th></tr></thead></table>
    </div>
    <div class="tabs" role="tablist">
      <button role="tab" aria-selected="true">信号/槽 编辑器</button><button role="tab">动作编辑器</button><button role="tab">资源浏览器</button>
    </div>
  </aside>
</main>

<footer class="status"></footer>
<button class="usb" aria-label="U 盘"><svg viewBox="0 0 24 32"><path d="M5 1h14v8H5z" fill="#ff9600"/><path d="M8 4h3v2H8zM13 4h3v2h-3z" fill="#fff"/><path d="M1.500 9.500h21V23c0 5-4 8-10.500 8S1.500 28 1.500 23z" fill="#fff" stroke="#ff9600" stroke-width="1.500"/><path d="M4 12h16v11c0 3-3 5.500-8 5.500S4 26 4 23z" fill="#ff9600"/></svg></button>
</body>
</html>
```
FILE: styles.css
```css
* { box-sizing: border-box; }
html, body { height: 100%; }
body {
  margin: 0;
  display: flex;
  flex-direction: column;
  background: #f0f0f0;
  color: #000;
  font: 18px/24px "Noto Sans", "Noto Sans CJK SC", sans-serif;
  overflow: hidden;
}
button, input { font: inherit; color: inherit; }
button { border: 0; padding: 0; background: none; text-align: left; }
h2, h3, ul, table { margin: 0; padding: 0; font-size: inherit; font-weight: normal; }
.defs { position: absolute; width: 0; height: 0; }
.t { font-family: "DejaVu Sans", sans-serif; }
.s { font-family: "Liberation Serif", serif; }
.o { font-family: "Open Sans", sans-serif; }
.up { transform: rotate(180deg); }

/* title bar and menu bar */
.titlebar { display: flex; align-items: center; height: 34px; flex: none; background: #0078d7; color: #fff; padding-left: 4px; }
.app-icon { width: 20px; height: 15px; }
.app-title { flex: 1; padding-left: 7px; }
.win-btn { width: 70px; height: 34px; display: grid; place-items: center; }
.win-btn svg { width: 16px; height: 16px; }
.menubar { display: flex; gap: 27px; height: 33px; flex: none; padding: 0 0 2px 12px; background: #fff; }

/* toolbar */
.toolbar { display: flex; align-items: center; height: 50px; flex: none; border-bottom: 1px solid #b4b4b4; }
.group { position: relative; display: flex; align-items: center; gap: 1px; height: 49px; padding: 0 2px 0 14px; border-right: 2px solid #b8b8b8; }
.group::before { content: ""; position: absolute; left: 5px; top: 6px; bottom: 6px; border-left: 2px dotted #b4b4b4; }
.group button { display: grid; place-items: center; width: 46px; height: 44px; }
.group .on { background: #c0dcf3; border: 1px solid #90c8f6; }
.group svg { width: 36px; height: 36px; }
.layouts { border: 0; gap: 0; padding: 0 13px 0 15px; }
.layouts::after { content: ""; position: absolute; left: 13px; right: 0; top: 2px; height: 45px; border: 3px solid #fe1302; }
.note { color: #fe1302; font-size: 28px; line-height: 36px; white-space: nowrap; }
.note-arrow { width: 70px; height: 16px; margin: 0 11px 0 4px; flex: none; }
.toolbar .note { padding-bottom: 6px; }
.toolbar > .note-arrow { margin-bottom: 4px; }

/* docks */
.work { flex: 1; min-height: 0; display: flex; padding-top: 1px; }
.dock { display: flex; flex-direction: column; flex: none; padding-top: 1px; }
.left { width: 384px; }
.right { width: 751px; }
.dock-title { display: flex; align-items: center; gap: 9px; height: 30px; flex: none; padding: 2px 5px 0 6px; background: #dadada; border: 1px solid #b6b6b6; border-bottom-width: 2px; }
.dock-title span { flex: 1; }
.dock-title button { width: 22px; height: 22px; display: grid; place-items: center; }
.dock-title svg { width: 16px; height: 16px; }
.filter { height: 30px; flex: none; border: 1px solid #7a7a7a; background: #fff; padding: 0 4px; outline: 0; }
.filter::placeholder { color: #808080; opacity: 1; }
.left .filter { margin: 7px 3px 3px; }
.panel { display: flex; min-height: 0; background: #fff; border: 1px solid #828790; border-top-color: #f4f4f4; overflow: hidden; }
.left .panel { flex: 1; margin-bottom: 1px; }
.widget-list { flex: 1; display: flex; flex-direction: column; justify-content: flex-end; overflow: hidden; }
.widget-list ul { flex: none; list-style: none; }
.widget-list li { display: flex; align-items: center; gap: 9px; height: 36px; padding: 0 0 3px 7px; }
.widget-list li svg { width: 33px; height: 33px; margin-top: 2px; }
.widget-list h3 { position: relative; flex: none; height: 27px; padding-left: 20px; margin: 0 2px 0 1px; text-align: center; background: linear-gradient(#f4f4f4, #e0e0e0); border: solid #a0a0a0; border-width: 1px 0; }
.widget-list h3 svg { position: absolute; left: 3px; top: 3px; width: 16px; height: 16px; color: #333; }

.scroll { display: flex; flex-direction: column; align-items: center; width: 25px; flex: none; background: #f0f0f0; }
.scroll svg { width: 14px; height: 26px; color: #555; }
.scroll .track { flex: 1; align-self: stretch; display: flex; flex-direction: column; }
.thumb { background: #cdcdcd; }
.scroll-box .track { justify-content: flex-end; }
.scroll-box .thumb { height: calc(50% - 5px); }
.scroll-prop .thumb { height: 27%; }
.idle svg { color: #aaa; }

/* form area */
.mdi { position: relative; flex: 1; min-width: 0; margin: 0 5px 0 6px; background: #a0a0a0; box-shadow: inset 1px 1px #828790, inset -1px 0 #828790; overflow: hidden; }
.form-window { position: absolute; left: 2px; top: 2px; width: 615px; height: 489px; background: linear-gradient(#9ab5d4, #b9d1ea 31px, #d8e6f5 60px, #dfeaf7 100px, #b9d1ea 130px); border: 1px solid #111; border-radius: 7px 7px 0 0; padding: 0 6px 6px; }
.form-title { display: flex; align-items: center; height: 31px; margin-right: -6px; }
.form-title > svg { width: 24px; height: 18px; margin-top: 8px; }
.form-title span { flex: 1; padding-top: 2px; }
.form-title button { width: 48px; height: 26px; align-self: start; margin-left: 3px; border: 1px solid #54657c; border-radius: 2px; display: grid; place-items: center; }
.fmin { background: linear-gradient(#c5d6ea 50%, #9cb5d0 50%, #b5cbe3); }
.fmin::before { content: ""; width: 17px; height: 7px; background: #fff; border: 1px solid #555; border-radius: 1px; }
.fclose { background: linear-gradient(#e09e94 45%, #b8412c 45%, #cf6149); }
.fclose svg { width: 20px; height: 16px; }
.form-body { position: relative; height: 450px; border-top: 1px solid #fff; background: linear-gradient(90deg, transparent 2px, #f0f0f0 2px) 0 0 / 15px 15px, linear-gradient(#a0a0a0 2px, #f0f0f0 2px) 0 0 / 15px 15px; }
.w { position: absolute; display: flex; line-height: 22px; }
.w > input { width: 100%; border: 1px solid #7a7a7a; background: #fff; padding: 0; outline: 0; }
.w > button { width: 100%; text-align: center; background: #e1e1e1; border: 1px solid #adadad; }
.w-user { left: 46px; top: 45px; width: 80px; height: 23px; }
.w-pass { left: 46px; top: 90px; width: 80px; height: 23px; }
.w-usere { left: 151px; top: 44px; width: 169px; height: 30px; }
.w-passe { left: 151px; top: 89px; width: 169px; height: 30px; }
.w-msg { left: 46px; top: 135px; width: 270px; height: 23px; }
.w-login { left: 46px; top: 180px; width: 111px; height: 34px; }
.w-exit { left: 181px; top: 180px; width: 111px; height: 34px; }
.w-exit > button { background: #e5f1fb; border-color: #0078d7; }
.sel, .main::after {
  --dot: linear-gradient(#000, #000);
  position: absolute; inset: -5px;
  background: var(--dot) 0 0, var(--dot) 50% 0, var(--dot) 100% 0, var(--dot) 0 50%, var(--dot) 100% 50%, var(--dot) 0 100%, var(--dot) 50% 100%, var(--dot) 100% 100%;
  background-size: 9px 9px; background-repeat: no-repeat;
}
.main { --dot: linear-gradient(#00f, #00f); }
.main::after { content: ""; inset: 1px 3px 3px 0; background-size: 6px 6px; }

/* popup menus */
.menu { position: absolute; background: #f0f0f0; border: 1px solid #ccc; box-shadow: 3px 3px 4px rgba(0,0,0,.4); }
.menu button { display: flex; align-items: center; width: 100%; height: 32px; position: relative; padding-bottom: 2px; }
.menu span { flex: 1; }
.menu hr { margin: 5px 4px 7px 37px; border: 0; height: 1px; background: #d4d4d4; }
.menu kbd { font: inherit; }
.menu .hot { background: #91c9f7; }
.menu button:disabled { color: #6d6d6d; }
.ctx { left: 266px; top: 229px; width: 298px; padding: 4px 5px 4px 4px; }
.ctx button { padding-left: 43px; }
.ctx .tall { height: 34px; }
.ctx button > svg { position: absolute; left: 4px; width: 24px; height: 24px; }
.ctx button > .tri { left: auto; right: 14px; width: 8px; height: 12px; }
.ctx kbd { width: 80px; }
.sub { left: 554px; top: 814px; width: 380px; padding: 4px 8px 4px 3px; }
.sub button { height: 34px; padding-left: 42px; }
.sub button:nth-child(even) { height: 35px; }
.sub button > svg { position: absolute; left: 4px; width: 24px; height: 24px; }
.sub kbd { width: 77px; }

/* annotations */
.mark { position: absolute; border: 3px solid #fe1302; pointer-events: none; }
.mark-form { left: 11px; top: 45px; width: 363px; height: 223px; }
.mark-ctx { left: 268px; top: 233px; width: 298px; height: 621px; }
.mark-sub { left: 553px; top: 813px; width: 381px; height: 316px; }
.callout { position: absolute; display: flex; align-items: center; }
.callout-form { left: 373px; top: 132px; }
.callout-sub { left: 936px; top: 1063px; }
.callout-sub .note { padding-left: 8px; }

/* right docks */
.right .dock-title + .filter { margin: 4px 0 9px; border-right: 0; }
.tree-panel { flex: 286 1 0; margin-bottom: 7px; }
.tree, .props, .sigs { flex: 1; border-collapse: collapse; table-layout: fixed; align-self: start; }
th, td { text-align: left; font-weight: normal; padding: 0; white-space: nowrap; }
th { position: relative; }
.c-obj { width: 205px; }
.tree th { height: 36px; padding: 3px 0 0 6px; border-right: 1px solid #e5e5e5; }
.tree tr { height: 27px; }
.tree .root { height: 31px; }
.tree td { padding: 0 0 2px 4px; background: #d9d9d9; line-height: 25px; }
.tree td:first-child { padding-left: 65px; background: linear-gradient(90deg, #fff 60px, #d9d9d9 60px); }
.tree tr:nth-child(even) td { background: #d0d0d0; }
.tree tr:nth-child(even) td:first-child { background: linear-gradient(90deg, #f5f5f5 60px, #d0d0d0 60px); }
.tree .root td, .tree .root td:first-child { background: #fff; line-height: 29px; position: relative; }
.tree .root td:first-child { padding-left: 68px; }
.lay { position: absolute; left: 34px; top: 3px; width: 25px; height: 25px; }
.chev { position: absolute; left: 7px; top: 8px; width: 15px; height: 15px; color: #333; }
.side { transform: rotate(-90deg); color: #999; }
.sort { position: absolute; left: 50%; top: 0; width: 14px; height: 12px; margin-left: -7px; color: #444; }

.prop-tools { display: flex; align-items: center; gap: 11px; height: 55px; flex: none; padding: 3px 8px 0 3px; }
.prop-tools .filter { flex: 1; margin-right: -6px; }
.prop-tools button, .sig-tools button { position: relative; width: 36px; height: 36px; }
.prop-tools svg, .sig-tools svg { width: 34px; height: 34px; display: block; }
.drop::after { content: ""; position: absolute; right: -1px; bottom: -1px; border: 5px solid transparent; border-top-color: #000; border-bottom: 0; }
.strip { height: 27px; flex: none; margin-bottom: 3px; padding-left: 4px; line-height: 26px; border: solid #b8b8b8; border-width: 0 1px 1px; }
.prop-panel { flex: 445 1 0; margin-bottom: 8px; }
.c-prop { width: 224px; }
.props th { height: 36px; padding-left: 6px; border-right: 1px solid #e5e5e5; }
.props tr { height: 30px; }
.props td { position: relative; height: 30px; line-height: 26px; padding: 0 0 2px 35px; background: #ffffdb; border-bottom: 1px solid #d6d6d6; border-right: 1px solid #d6d6d6; }
.props td + td { padding-left: 5px; border-right: 0; }
.props .alt td { background: #ffffbf; }
.props .peach td { background: #ffefde; }
.props .grp td { background: #a0a0a0; color: #fff; font-weight: bold; }
.props .cur td { background: #f0f0f0; }
.props .cur td:first-child { background: linear-gradient(90deg, #ffffbf 30px, #f0f0f0 30px); border-right-color: #f0f0f0; }
.props td.subp { padding-left: 65px; }
.props input { appearance: none; display: block; width: 20px; height: 20px; margin: 2px 0 0; background: #fff; border: 2px solid #222; position: relative; }
.props input::after { content: ""; position: absolute; left: 5px; top: 1px; width: 5px; height: 9px; border: solid #222; border-width: 0 2px 2px 0; transform: rotate(45deg); }

.sig-tools { display: flex; align-items: center; gap: 8px; height: 52px; flex: none; padding: 3px 0 0 7px; }
.sig-panel { flex: 182 1 0; }
.sigs { flex: none; }
.sigs th { height: 36px; padding: 3px 5px 0 6px; border-right: 1px solid #e5e5e5; }
.sigs th:last-child { border: 0; }
.tabs { display: flex; align-items: start; height: 34px; flex: none; }
.tabs button { height: 31px; padding: 0 19px 0 16px; border: solid #d9d9d9; border-width: 0 1px 1px 0; }
.tabs button:first-child { height: 34px; padding: 0 20px 0 18px; background: #fff; }
.tabs button:last-child { border-right: 0; }
.status { height: 30px; flex: none; }
.usb { position: fixed; right: 0; bottom: 130px; width: 48px; height: 52px; display: grid; place-items: center; background: #fafafa; border: 2px solid #ddd; border-right: 0; border-radius: 12px 0 0 12px; box-shadow: 0 0 4px rgba(0,0,0,.2); }
.usb svg { width: 24px; height: 32px; }
```
